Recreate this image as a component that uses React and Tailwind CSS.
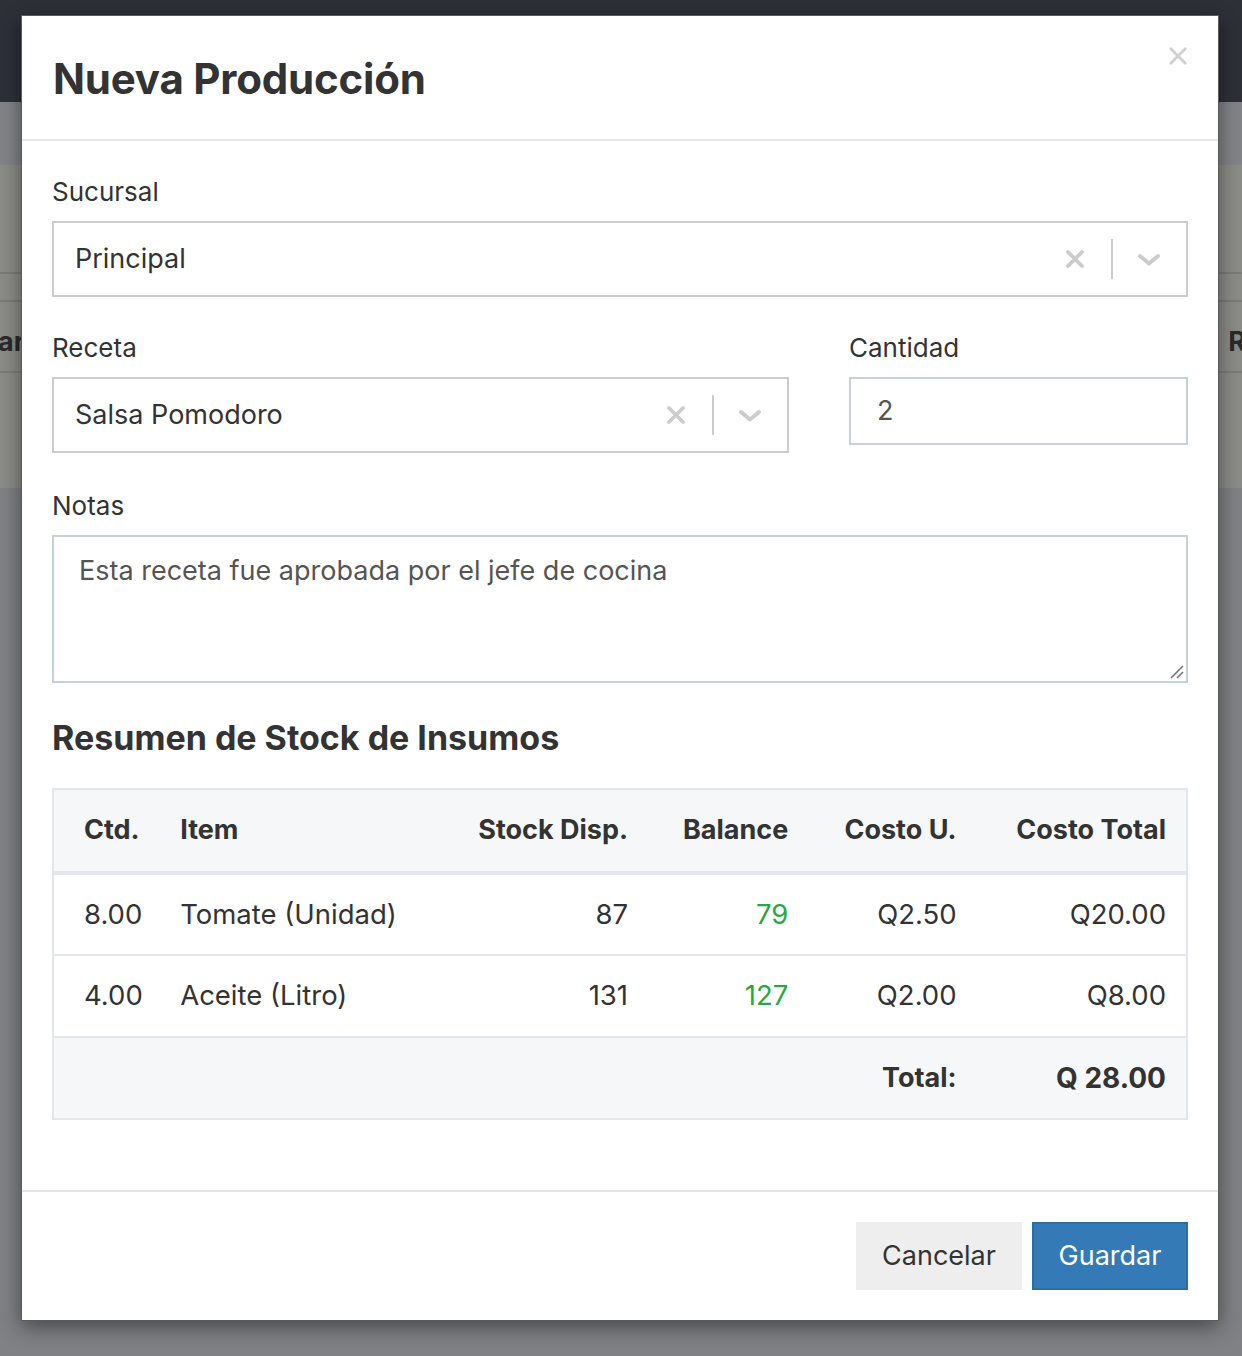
import React from 'react';

const SelectBox = ({ value, className = '' }) => (
  <div className={`flex items-center h-[76px] border-2 border-[#cccccc] bg-white ${className}`}>
    <span className="flex-1 pl-[21px] text-[27px] text-[#333333]">{value}</span>
    <div className="flex items-center h-full pr-[25px]">
      <svg width="20" height="20" viewBox="0 0 20 20" className="mr-[26px]">
        <path d="M3 3 L17 17 M17 3 L3 17" stroke="#cccccc" strokeWidth="3.8" strokeLinecap="round" />
      </svg>
      <div className="w-[2px] h-[40px] bg-[#cccccc]" />
      <svg width="24" height="14" viewBox="0 0 24 14" className="ml-[24px] mt-[2px]">
        <path d="M3 3 L12 10.5 L21 3" stroke="#cccccc" strokeWidth="4" fill="none" strokeLinecap="round" strokeLinejoin="round" />
      </svg>
    </div>
  </div>
);

const rows = [
  { ctd: '8.00', item: 'Tomate (Unidad)', stock: '87', balance: '79', cu: 'Q2.50', ct: 'Q20.00' },
  { ctd: '4.00', item: 'Aceite (Litro)', stock: '131', balance: '127', cu: 'Q2.00', ct: 'Q8.00' },
];

export default function App() {
  return (
    <div className="relative h-[1356px] overflow-hidden bg-[#7f8185] font-['Inter','Noto_Sans',sans-serif]">
      {/* dimmed page behind the modal */}
      <div className="h-[102px] bg-[#2e3038]" />
      <div className="h-[63px] bg-[#828488]" />
      <div className="bg-[#8b8b87]">
        <div className="h-[109px] border-b-2 border-[#7b7b78]" />
        <div className="h-[28px] border-b-2 border-[#7b7b78]" />
        <div className="h-[71px] pt-[12px] border-b-2 border-[#7b7b78] flex items-center justify-between text-[27px] font-bold text-[#2a2a2a]">
          <span className="-ml-[2px]">ar</span>
          <span className="mr-[-4px]">R</span>
        </div>
        <div className="h-[115px]" />
      </div>

      {/* modal */}
      <div className="absolute left-[21px] top-[15px] w-[1198px] bg-white border border-[#5a5a5a] shadow-[0_6px_20px_rgba(0,0,0,0.45)]">
        <div className="relative h-[125px] border-b-2 border-[#e5e5e5] px-[31px] flex items-center">
          <h2 className="text-[42px] font-bold text-[#333333] tracking-[-0.2px] mt-[2px]">Nueva Producción</h2>
          <svg width="20" height="20" viewBox="0 0 20 20" className="absolute right-[30px] top-[30px]">
            <path d="M2 2 L18 18 M18 2 L2 18" stroke="#cfcfcf" strokeWidth="2.6" />
          </svg>
        </div>

        <div className="px-[30px] pt-[31px] pb-[70px] text-[#333333]">
          <label className="block h-[40px] leading-[40px] text-[26px] mb-[9px]">Sucursal</label>
          <SelectBox value="Principal" />

          <div className="grid grid-cols-[737px_1fr] gap-x-[60px] mt-[31px]">
            <div>
              <label className="block h-[40px] leading-[40px] text-[26px] mb-[9px]">Receta</label>
              <SelectBox value="Salsa Pomodoro" />
            </div>
            <div>
              <label className="block h-[40px] leading-[40px] text-[26px] mb-[9px]">Cantidad</label>
              <div className="h-[68px] border-2 border-[#c6d0dc] flex items-center pl-[26px] text-[27px] text-[#555555]">2</div>
            </div>
          </div>

          <label className="block h-[40px] leading-[40px] text-[26px] mb-[9px] mt-[33px]">Notas</label>
          <div className="relative h-[148px] border-2 border-[#c6d0dc] px-[25px] pt-[14px] text-[27px] text-[#555555]">
            Esta receta fue aprobada por el jefe de cocina
            <svg width="16" height="16" viewBox="0 0 16 16" className="absolute right-[2px] bottom-[2px]">
              <path d="M3 15 L15 3 M9 15 L15 9" stroke="#777777" strokeWidth="1.6" />
            </svg>
          </div>

          <h3 className="mt-[33px] h-[44px] leading-[44px] text-[34px] font-bold text-[#333333]">Resumen de Stock de Insumos</h3>

          <table className="mt-[28px] w-full table-fixed border-collapse border-2 border-[#e3e6ea] text-[27.5px]">
            <colgroup>
              <col className="w-[97px]" />
              <col className="w-[297px]" />
              <col className="w-[200px]" />
              <col className="w-[160px]" />
              <col className="w-[168px]" />
              <col className="w-[210px]" />
            </colgroup>
            <thead>
              <tr className="h-[84px] bg-[#f6f7f9] border-b-4 border-[#e3e7ec] font-bold text-[27px]">
                <th className="text-left pl-[30px]">Ctd.</th>
                <th className="text-left pl-[30px]">Item</th>
                <th className="text-right pr-[20px]">Stock Disp.</th>
                <th className="text-right pr-[20px]">Balance</th>
                <th className="text-right pr-[20px]">Costo U.</th>
                <th className="text-right pr-[20px]">Costo Total</th>
              </tr>
            </thead>
            <tbody>
              {rows.map((r) => (
                <tr key={r.item} className="h-[82px] border-b-2 border-[#e3e6ea]">
                  <td className="pl-[30px]">{r.ctd}</td>
                  <td className="pl-[30px]">{r.item}</td>
                  <td className="text-right pr-[20px]">{r.stock}</td>
                  <td className="text-right pr-[20px] text-[#28a745]">{r.balance}</td>
                  <td className="text-right pr-[20px]">{r.cu}</td>
                  <td className="text-right pr-[20px]">{r.ct}</td>
                </tr>
              ))}
              <tr className="h-[82px] bg-[#f6f7f9] font-bold">
                <td colSpan={4} />
                <td className="text-right pr-[20px] text-[27px]">Total:</td>
                <td className="text-right pr-[20px] text-[28px]">Q 28.00</td>
              </tr>
            </tbody>
          </table>
        </div>

        <div className="border-t-2 border-[#e5e5e5] px-[30px] py-[30px] flex justify-end gap-[10px]">
          <button className="h-[68px] w-[166px] bg-[#eeeeee] text-[27px] text-[#333333]">Cancelar</button>
          <button className="h-[68px] w-[156px] bg-[#337ab7] border-2 border-[#2e6da4] text-[27px] text-white">Guardar</button>
        </div>
      </div>
    </div>
  );
}
